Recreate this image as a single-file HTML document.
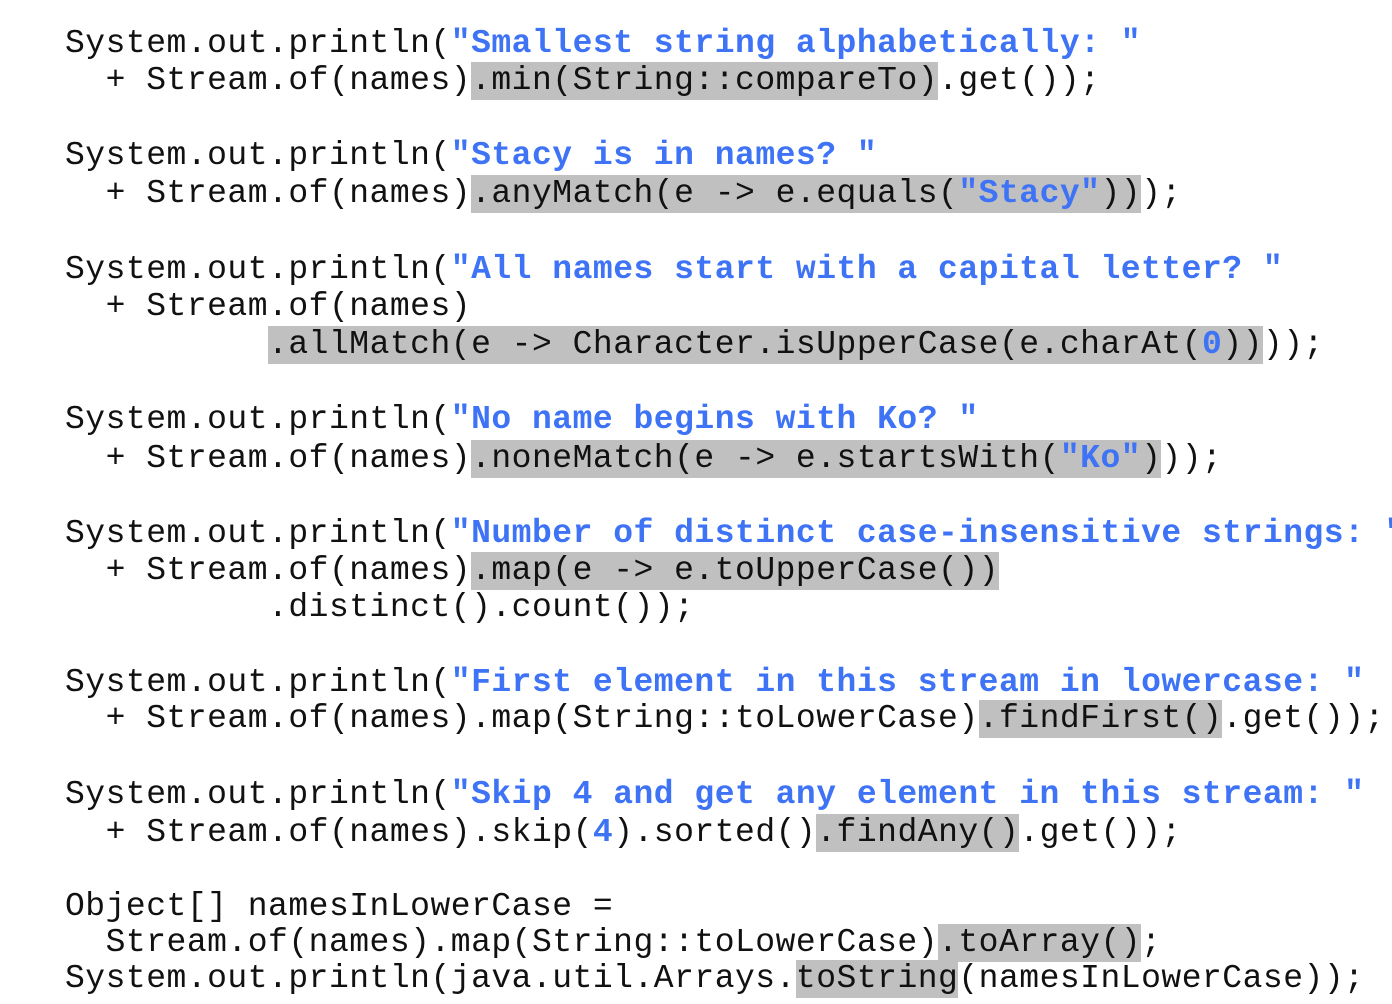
<!DOCTYPE html>
<html><head><style>
html,body{margin:0;padding:0;background:#fff;width:1392px;height:1004px;overflow:hidden;position:relative}
.l{position:absolute;left:65px;white-space:pre;font-family:"Liberation Mono",monospace;font-size:33px;letter-spacing:0.5px;line-height:38px;height:38px;color:#111}
.h{background:#c0c0c0;display:inline-block;height:38px}
.s{color:#3f73f5;font-weight:bold}
</style></head><body>
<div class="l" style="top:25px">System.out.println(<span class="s">"Smallest string alphabetically: "</span></div>
<div class="l" style="top:62px">  + Stream.of(names)<span class="h">.min(String::compareTo)</span>.get());</div>
<div class="l" style="top:137px">System.out.println(<span class="s">"Stacy is in names? "</span></div>
<div class="l" style="top:175px">  + Stream.of(names)<span class="h">.anyMatch(e -&gt; e.equals(<span class="s">"Stacy"</span>))</span>);</div>
<div class="l" style="top:251px">System.out.println(<span class="s">"All names start with a capital letter? "</span></div>
<div class="l" style="top:288px">  + Stream.of(names)</div>
<div class="l" style="top:326px">          <span class="h">.allMatch(e -&gt; Character.isUpperCase(e.charAt(<span class="s">0</span>))</span>));</div>
<div class="l" style="top:401px">System.out.println(<span class="s">"No name begins with Ko? "</span></div>
<div class="l" style="top:440px">  + Stream.of(names)<span class="h">.noneMatch(e -&gt; e.startsWith(<span class="s">"Ko"</span>)</span>));</div>
<div class="l" style="top:515px">System.out.println(<span class="s">"Number of distinct case-insensitive strings: "</span></div>
<div class="l" style="top:552px">  + Stream.of(names)<span class="h">.map(e -&gt; e.toUpperCase())</span></div>
<div class="l" style="top:589px">          .distinct().count());</div>
<div class="l" style="top:664px">System.out.println(<span class="s">"First element in this stream in lowercase: "</span></div>
<div class="l" style="top:700px">  + Stream.of(names).map(String::toLowerCase)<span class="h">.findFirst()</span>.get());</div>
<div class="l" style="top:776px">System.out.println(<span class="s">"Skip 4 and get any element in this stream: "</span></div>
<div class="l" style="top:814px">  + Stream.of(names).skip(<span class="s">4</span>).sorted()<span class="h">.findAny()</span>.get());</div>
<div class="l" style="top:888px">Object[] namesInLowerCase =</div>
<div class="l" style="top:924px">  Stream.of(names).map(String::toLowerCase)<span class="h">.toArray()</span>;</div>
<div class="l" style="top:960px">System.out.println(java.util.Arrays.<span class="h">toString</span>(namesInLowerCase));</div>
</body></html>
